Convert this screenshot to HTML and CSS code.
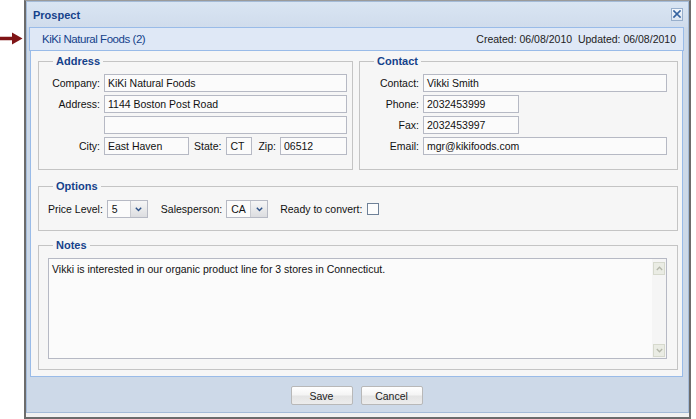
FILE: index.html
```html
<!DOCTYPE html>
<html>
<head>
<meta charset="utf-8">
<link rel="stylesheet" href="styles.css">
</head>
<body>
<svg class="arrow" width="23" height="13" viewBox="0 0 23 13"><path d="M0 4.8 H12 V0.5 L22.5 6.5 L12 12.5 V8.2 H0 Z" fill="#7f1416"/></svg>
<div class="frame">
  <div class="window">
    <div class="titlebar">
      <span class="title">Prospect</span>
      <span class="close"><svg width="8" height="8" viewBox="0 0 8 8"><path d="M1 1 L7 7 M7 1 L1 7" stroke="#3563a0" stroke-width="1.7" stroke-linecap="square"/></svg></span>
    </div>
    <div class="header">
      <span class="name">KiKi Natural Foods (2)</span>
      <span class="dates">Created: 06/08/2010&nbsp; Updated: 06/08/2010</span>
    </div>
    <div class="content">
      <div class="toprow">
        <fieldset class="fs address">
          <legend>Address</legend>
          <div class="grid grid-address">
            <label>Company:</label><div class="input">KiKi Natural Foods</div>
            <label>Address:</label><div class="input">1144 Boston Post Road</div>
            <span></span><div class="input"></div>
            <label>City:</label>
            <div class="inline">
              <div class="input w-city">East Haven</div>
              <label class="lbl-state">State:</label>
              <div class="input w-state">CT</div>
              <label class="lbl-zip">Zip:</label>
              <div class="input w-zip">06512</div>
            </div>
          </div>
        </fieldset>
        <fieldset class="fs contact">
          <legend>Contact</legend>
          <div class="grid grid-contact">
            <label>Contact:</label><div class="input">Vikki Smith</div>
            <label>Phone:</label><div class="input w-phone">2032453999</div>
            <label>Fax:</label><div class="input w-phone">2032453997</div>
            <label>Email:</label><div class="input">mgr@kikifoods.com</div>
          </div>
        </fieldset>
      </div>
      <fieldset class="fs options">
        <legend>Options</legend>
        <div class="optrow">
          <label>Price Level:</label>
          <div class="select w-price"><span class="val">5</span><span class="trig"><svg width="7" height="5" viewBox="0 0 7 5"><path d="M0.8 0.8 L3.5 3.6 L6.2 0.8" fill="none" stroke="#2e5288" stroke-width="1.4"/></svg></span></div>
          <label class="lbl-sales">Salesperson:</label>
          <div class="select w-sales"><span class="val">CA</span><span class="trig"><svg width="7" height="5" viewBox="0 0 7 5"><path d="M0.8 0.8 L3.5 3.6 L6.2 0.8" fill="none" stroke="#2e5288" stroke-width="1.4"/></svg></span></div>
          <label class="lbl-ready">Ready to convert:</label>
          <span class="checkbox"></span>
        </div>
      </fieldset>
      <fieldset class="fs notes">
        <legend>Notes</legend>
        <div class="textarea">
          <div class="ta-text">Vikki is interested in our organic product line for 3 stores in Connecticut.</div>
          <div class="scroll">
            <span class="sbtn"><svg width="7" height="5" viewBox="0 0 7 5"><path d="M0.8 4 L3.5 1.2 L6.2 4" fill="none" stroke="#b4b7aa" stroke-width="1.3"/></svg></span>
            <span class="sbtn"><svg width="7" height="5" viewBox="0 0 7 5"><path d="M0.8 1 L3.5 3.8 L6.2 1" fill="none" stroke="#b4b7aa" stroke-width="1.3"/></svg></span>
          </div>
        </div>
      </fieldset>
    </div>
    <div class="buttons">
      <button class="btn">Save</button>
      <button class="btn">Cancel</button>
    </div>
  </div>
</div>
</body>
</html>
```
FILE: styles.css
```css
* { box-sizing: border-box; }
html, body { margin: 0; padding: 0; }
body {
  width: 696px;
  height: 419px;
  overflow: hidden;
  position: relative;
  background: #ffffff;
  font-family: "Liberation Sans", Arial, sans-serif;
  font-size: 10.5px;
  color: #111;
}
.arrow { position: absolute; left: 0; top: 32px; }
.frame {
  margin-left: 24px;
  width: 667px;
  height: 419px;
  border-left: 2px solid #6c6c6c;
  border-right: 2px solid #6c6c6c;
  border-bottom: 2px solid #6c6c6c;
  border-top: 1px solid #9a9a9a;
  background: #f1f1f1;
}
.window {
  height: 412px;
  background: #cdd9e8;
  border: 1px solid #a4bbd8;
  padding: 0 5px 0 3px;
  display: flex;
  flex-direction: column;
}
.titlebar {
  height: 25px;
  flex: none;
  margin: 0 -5px 0 -3px;
  padding: 0 5px 0 6px;
  display: flex;
  align-items: center;
  justify-content: space-between;
  background: linear-gradient(#d9e5f3, #d0dcec);
}
.title { font-weight: bold; color: #15428b; font-size: 11px; }
.close {
  width: 12px;
  height: 13px;
  margin-top: -1px;
  border: 1px solid #98afcc;
  background: linear-gradient(#f3f7fc, #dbe5f2);
  display: flex;
  align-items: center;
  justify-content: center;
}
.header {
  flex: none;
  height: 24px;
  margin: 0 -1px;
  border: 1px solid #99bbe8;
  background: #dfe8f6;
  display: flex;
  align-items: center;
  justify-content: space-between;
  padding: 0 7px 0 12px;
}
.name { color: #15428b; font-size: 11.5px; letter-spacing: -0.45px; }
.dates { color: #222; font-size: 10.5px; }
.content {
  flex: none;
  height: 326px;
  background: #f6f6f6;
  border: 1px solid #99bbe8;
  border-top: 0;
  padding: 4px 4px 4px 7px;
}
.fs {
  margin: 0;
  min-width: 0;
  border: 1px solid #c4c4c4;
  padding: 6px 10px 14px 9px;
}
.fs legend {
  padding: 0 3px;
  margin-left: 5px;
  font-weight: bold;
  color: #15428b;
  font-size: 11px;
  line-height: 13px;
}
.toprow { display: flex; gap: 6px; }
.address { width: 315px; flex: none; padding-right: 5px; }
.contact { flex: 1; }
.grid {
  display: grid;
  column-gap: 4px;
  row-gap: 3px;
  align-items: center;
}
.grid-address { grid-template-columns: 52px 1fr; }
.grid-contact { grid-template-columns: 50px 1fr; }
.grid label { text-align: right; white-space: nowrap; }
.input {
  height: 18px;
  border: 1px solid #b6b9c4;
  background: #fbfbfb;
  padding: 0 3px;
  line-height: 16px;
  white-space: nowrap;
  overflow: hidden;
  color: #111;
}
.inline { display: flex; align-items: center; }
.w-city { width: 85px; }
.lbl-state { margin-left: 5px; margin-right: 5px; }
.w-state { width: 26px; }
.lbl-zip { margin-left: 6px; margin-right: 4px; }
.w-zip { flex: 1; }
.w-phone { width: 96px; }
.options { margin-top: 10px; padding-top: 7px; padding-bottom: 12px; }
.optrow { display: flex; align-items: center; height: 18px; }
.select {
  display: flex;
  height: 18px;
  border: 1px solid #b6b9c4;
  background: #fbfbfb;
  margin-left: 4px;
}
.select .val { flex: 1; padding-left: 4px; line-height: 16px; }
.select .trig {
  width: 17px;
  border-left: 1px solid #c8cad0;
  background: linear-gradient(#f6f6f6, #dcdde0);
  display: flex;
  align-items: center;
  justify-content: center;
}
.w-price { width: 41px; }
.w-sales { width: 42px; }
.lbl-sales { margin-left: 13px; }
.lbl-ready { margin-left: 12px; }
.checkbox {
  width: 12px;
  height: 12px;
  margin-left: 5px;
  border: 1px solid #6f8198;
  background: #fdfdfd;
}
.notes { margin-top: 8px; padding-bottom: 10px; }
.textarea {
  height: 101px;
  border: 1px solid #b6b9c4;
  background: #fbfbfb;
  display: flex;
}
.ta-text { flex: 1; padding: 3px 3px; line-height: 14px; color: #111; }
.scroll {
  width: 14px;
  background: #f5f5f5;
  display: flex;
  flex-direction: column;
  justify-content: space-between;
  padding: 3px 0 1px 1px;
}
.sbtn {
  width: 12px;
  height: 13px;
  background: #eaece4;
  border: 1px solid #d6d9cd;
  display: flex;
  align-items: center;
  justify-content: center;
}
.buttons {
  flex: 1;
  display: flex;
  justify-content: center;
  align-items: flex-start;
  gap: 8px;
  padding-top: 9px;
}
.btn {
  width: 62px;
  height: 19px;
  padding: 0;
  margin: 0;
  border: 1px solid #b8b8b8;
  border-radius: 2px;
  background: linear-gradient(#ffffff 0%, #f4f4f4 48%, #e4e4e4 52%, #ececec 100%);
  font-family: "Liberation Sans", Arial, sans-serif;
  font-size: 10.5px;
  color: #222;
}
```
